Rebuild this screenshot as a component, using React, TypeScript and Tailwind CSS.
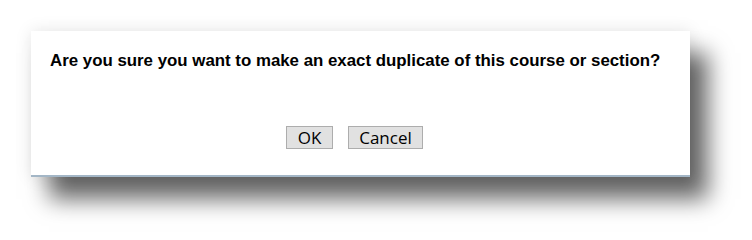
const App = () => {
  return (
    <div className="w-[752px] h-[240px] bg-white pt-[31px] pl-[31px]">
      <div className="w-[659px] h-[146px] bg-white border-b-2 border-[#a3b6c6] flex flex-col shadow-[0_0_16px_rgba(0,0,0,0.1),18px_22px_22px_rgba(0,0,0,0.6)]">
        <p className="pl-[19px] pt-[20px] text-[16.85px] font-bold text-black leading-5 font-['Liberation_Sans',Arial,sans-serif]">
          Are you sure you want to make an exact duplicate of this course or section?
        </p>
        <div className="flex gap-[15px] pl-[255px] mt-[55px]">
          <button className="w-[47px] h-[23px] bg-[#e1e1e1] border border-[#adadad] text-[17px] leading-none text-black font-['Open_Sans',sans-serif]">
            OK
          </button>
          <button className="w-[75px] h-[23px] bg-[#e1e1e1] border border-[#adadad] text-[17px] leading-none text-black font-['Open_Sans',sans-serif]">
            Cancel
          </button>
        </div>
      </div>
    </div>
  );
};

export default App;
